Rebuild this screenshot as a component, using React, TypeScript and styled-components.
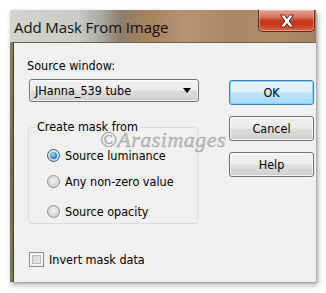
import React from "react";
import styled, { createGlobalStyle, css } from "styled-components";

const GlobalStyle = createGlobalStyle`
  html, body {
    margin: 0;
    padding: 0;
    background: #ffffff;
  }
  body {
    width: 326px;
    height: 293px;
    overflow: hidden;
  }
`;

const uiFont = `"DejaVu Sans Condensed", "DejaVu Sans", sans-serif`;

const Window = styled.div`
  margin: 10px 0 0 10px;
  width: 306px;
  height: 272px;
  display: flex;
  flex-direction: column;
  background: linear-gradient(to bottom, #8c8468, #6f6c52 60%, #7a7a5c);
  box-shadow: 2px 3px 6px rgba(0, 0, 0, 0.3), 1px 1px 2px rgba(0, 0, 0, 0.2);
`;

const TitleBar = styled.div`
  height: 32px;
  display: flex;
  align-items: flex-start;
  justify-content: space-between;
  background: linear-gradient(
    to right,
    #d2d5cd 0%,
    #c9ccc2 22%,
    #a9aaa2 30%,
    #8b7d6b 36%,
    #a5815d 44%,
    #b89373 58%,
    #a98866 72%,
    #b08b67 86%,
    #a38262 100%
  );
`;

const Title = styled.div`
  font-family: "Open Sans", "Noto Sans", sans-serif;
  font-size: 15px;
  color: #111111;
  padding: 7px 0 0 4px;
  letter-spacing: -0.1px;
`;

const CloseButton = styled.div`
  width: 57px;
  height: 22px;
  margin-right: 1px;
  box-sizing: border-box;
  border: 1px solid #5a2a1c;
  border-top: none;
  border-radius: 0 0 5px 5px;
  background: linear-gradient(
    to bottom,
    #e5a494 0%,
    #d87a62 30%,
    #c8391c 52%,
    #c63a1d 70%,
    #dd6a44 100%
  );
  box-shadow: inset 0 0 0 1px rgba(255, 210, 190, 0.45);
  display: flex;
  align-items: center;
  justify-content: center;
`;

const Client = styled.div`
  flex: 1;
  margin-left: 3px;
  border-top: 1px solid #6b604c;
  border-left: 1px solid #3f3e2c;
  background: #f0f0f0;
  display: flex;
  position: relative;
  font-family: ${uiFont};
  font-size: 12.5px;
  color: #000000;
`;

const LeftColumn = styled.div`
  width: 172px;
  padding: 16px 0 0 13px;
  display: flex;
  flex-direction: column;
`;

const Label = styled.div`
  height: 14px;
  line-height: 14px;
`;

const Select = styled.div`
  margin: 6px 0 0 2px;
  width: 170px;
  height: 23px;
  box-sizing: border-box;
  border: 1px solid #707070;
  border-radius: 3px;
  background: linear-gradient(to bottom, #f2f2f2 0%, #ebebeb 48%, #dddddd 52%, #cfcfcf 100%);
  box-shadow: inset 0 0 0 1px rgba(255, 255, 255, 0.7);
  display: flex;
  align-items: center;
  justify-content: space-between;
  padding: 0 7px 0 5px;
`;

const Arrow = styled.div`
  width: 0;
  height: 0;
  border-left: 4px solid transparent;
  border-right: 4px solid transparent;
  border-top: 5px solid #000000;
`;

const GroupBox = styled.fieldset`
  margin: 18px 0 0 1px;
  width: 170px;
  height: 104px;
  box-sizing: border-box;
  border: 1px solid #d5dfe5;
  border-radius: 3px;
  padding: 0 0 0 18px;
  position: relative;
`;

const Legend = styled.legend`
  padding: 0 2px;
  margin-left: -12px;
  font-size: 12.5px;
  line-height: 14px;
`;

const Option = styled.div<{ $gap: number }>`
  display: flex;
  align-items: center;
  height: 16px;
  margin-top: ${({ $gap }) => $gap}px;
  gap: 5px;
`;

const RadioCircle = styled.div<{ $checked: boolean }>`
  width: 13px;
  height: 13px;
  box-sizing: border-box;
  border-radius: 50%;
  border: 1px solid #8e8f8f;
  background: radial-gradient(circle at 50% 40%, #f4f4f4 0%, #d4d4d4 70%, #c4c4c4 100%);
  display: flex;
  align-items: center;
  justify-content: center;
  ${({ $checked }) =>
    $checked &&
    css`
      border-color: #2c628b;
      &::after {
        content: "";
        width: 7px;
        height: 7px;
        border-radius: 50%;
        background: radial-gradient(circle at 40% 35%, #a6e0fa 0%, #39a4dc 45%, #0d4f7c 100%);
      }
    `}
`;

const CheckRow = styled.div`
  margin-top: 28px;
  display: flex;
  align-items: center;
  gap: 5px;
  padding-left: 2px;
`;

const CheckBox = styled.div`
  width: 15px;
  height: 15px;
  box-sizing: border-box;
  border: 1px solid #8e8f8f;
  background: linear-gradient(135deg, #cbcbcb 0%, #f4f4f4 100%);
  box-shadow: inset 0 0 0 2px #f4f4f4, inset 0 0 0 3px #bdbdbd;
`;

const RightColumn = styled.div`
  padding: 37px 0 0 30px;
  display: flex;
  flex-direction: column;
  gap: 11px;
`;

const Button = styled.div<{ $default?: boolean }>`
  width: 85px;
  height: 25px;
  box-sizing: border-box;
  border: 1px solid #707070;
  border-radius: 3px;
  background: linear-gradient(to bottom, #f2f2f2 0%, #ebebeb 48%, #dddddd 52%, #cfcfcf 100%);
  box-shadow: inset 0 0 0 1px rgba(255, 255, 255, 0.75);
  display: flex;
  align-items: center;
  justify-content: center;
  ${({ $default }) =>
    $default &&
    css`
      border-color: #3c7fb1;
      background: linear-gradient(to bottom, #eaf6fd 0%, #d9f0fc 48%, #bee6fd 52%, #a7d9f5 100%);
      box-shadow: inset 0 0 0 1px #8fd4f5;
    `}
`;

const Watermark = styled.div`
  position: absolute;
  left: 86px;
  top: 84px;
  font-family: "Liberation Serif", serif;
  font-style: italic;
  font-size: 22px;
  letter-spacing: 0.5px;
  color: rgba(150, 150, 150, 0.5);
  -webkit-text-stroke: 0.5px rgba(120, 120, 120, 0.55);
  pointer-events: none;
`;

const CloseIcon = () => (
  <svg width="16" height="14" viewBox="0 0 16 14">
    <path
      d="M1.5 1 L5.5 1 L8 4.4 L10.5 1 L14.5 1 L10.2 7 L14.5 13 L10.5 13 L8 9.6 L5.5 13 L1.5 13 L5.8 7 Z"
      fill="#ffffff"
      stroke="#5a2a20"
      strokeWidth="1"
      strokeLinejoin="round"
    />
  </svg>
);

const App = () => {
  return (
    <>
      <GlobalStyle />
      <Window>
        <TitleBar>
          <Title>Add Mask From Image</Title>
          <CloseButton>
            <CloseIcon />
          </CloseButton>
        </TitleBar>
        <Client>
          <LeftColumn>
            <Label>Source window:</Label>
            <Select>
              <span>JHanna_539 tube</span>
              <Arrow />
            </Select>
            <GroupBox>
              <Legend>Create mask from</Legend>
              <Option $gap={13}>
                <RadioCircle $checked />
                <span>Source luminance</span>
              </Option>
              <Option $gap={10}>
                <RadioCircle $checked={false} />
                <span>Any non-zero value</span>
              </Option>
              <Option $gap={14}>
                <RadioCircle $checked={false} />
                <span>Source opacity</span>
              </Option>
            </GroupBox>
            <CheckRow>
              <CheckBox />
              <span>Invert mask data</span>
            </CheckRow>
          </LeftColumn>
          <RightColumn>
            <Button $default>OK</Button>
            <Button>Cancel</Button>
            <Button>Help</Button>
          </RightColumn>
          <Watermark>©Arasimages</Watermark>
        </Client>
      </Window>
    </>
  );
};

export default App;
